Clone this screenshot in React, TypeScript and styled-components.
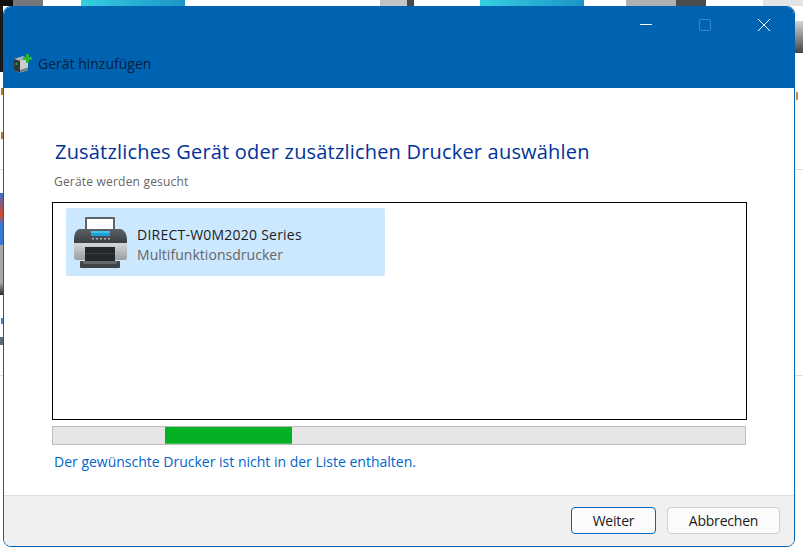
import React from "react";
import styled, { createGlobalStyle } from "styled-components";

const GlobalStyle = createGlobalStyle`
  html, body {
    margin: 0;
    padding: 0;
    background: #ffffff;
  }
  body {
    font-family: "Open Sans", "Noto Sans", "Liberation Sans", sans-serif;
  }
`;

// the page behind the dialog only shows as thin strips round its edge
const solid = (c: string) => `linear-gradient(${c}, ${c})`;
const cyan = "linear-gradient(90deg, #35cfe0, #1c93c8)";

const Desktop = styled.div`
  width: 803px;
  height: 553px;
  overflow: hidden;
  padding: 6px 8px 6px 3px;
  box-sizing: border-box;
  background:
    ${solid("#101010")} 0 0 / 13px 6px no-repeat,
    ${solid("#74777c")} 13px 0 / 30px 6px no-repeat,
    ${cyan} 81px 0 / 104px 6px no-repeat,
    ${solid("#c4c4c4")} 380px 0 / 27px 6px no-repeat,
    ${solid("#4a4a4a")} 407px 0 / 7px 6px no-repeat,
    ${cyan} 480px 0 / 104px 6px no-repeat,
    ${solid("#aeb0b3")} 626px 0 / 50px 6px no-repeat,
    ${solid("#4c4c4c")} 676px 0 / 30px 6px no-repeat,
    ${solid("#e3e4e8")} 763px 0 / 40px 6px no-repeat,
    ${solid("#1a1a1a")} 0 0 / 3px 72px no-repeat,
    ${solid("#b9742a")} 1px 88px / 2px 7px no-repeat,
    ${solid("#b9742a")} 1px 132px / 2px 7px no-repeat,
    ${solid("#dddddd")} 0 169px / 3px 1px no-repeat,
    linear-gradient(180deg, #3a6fd0, #d8482a 42%, #3a78d8 60%) 0 193px / 3px 52px no-repeat,
    linear-gradient(180deg, #a8a8a8 75%, #2a2a2a) 0 245px / 3px 50px no-repeat,
    ${solid("#3a86c8")} 1px 318px / 2px 6px no-repeat,
    ${solid("#5a6a78")} 0 337px / 3px 8px no-repeat,
    ${solid("#dddddd")} 0 375px / 3px 1px no-repeat,
    linear-gradient(180deg, #d5d5d5, #444444) 795px 21px / 8px 32px no-repeat,
    ${solid("#c98a3a")} 796px 92px / 2px 8px no-repeat,
    ${solid("#dddddd")} 795px 169px / 8px 1px no-repeat,
    ${solid("#dddddd")} 795px 375px / 8px 1px no-repeat,
    #ffffff;
`;

const Dialog = styled.div`
  width: 792px;
  height: 541px;
  box-sizing: border-box;
  display: flex;
  flex-direction: column;
  background: #ffffff;
  border: 1px solid #0063b1;
  border-radius: 8px;
  overflow: hidden;
`;

const TitleBar = styled.div`
  height: 82px;
  flex: none;
  margin: -1px -1px 0;
  background: #0063b1;
  display: flex;
  flex-direction: column;
  justify-content: space-between;
`;

const WindowControls = styled.div`
  display: flex;
  justify-content: flex-end;
  align-items: center;
  gap: 47px;
  padding: 13px 25px 0 0;
  height: 12px;
`;

const ControlIcon = styled.svg`
  display: block;
  width: 12px;
  height: 12px;
`;

const TitleRow = styled.div`
  display: flex;
  align-items: center;
  gap: 6px;
  padding: 0 0 15px 11px;
`;

const TitleText = styled.span`
  font-size: 14px;
  line-height: 18px;
  color: #06203f;
`;

const Content = styled.div`
  flex: 1;
  display: flex;
  flex-direction: column;
  padding: 0 48px 0 48px;
`;

const Heading = styled.h1`
  margin: 49px 0 0 3px;
  font-size: 20px;
  font-weight: 400;
  letter-spacing: 0.19px;
  line-height: 30px;
  color: #003399;
`;

const Status = styled.div`
  margin: 7px 0 0 2px;
  font-size: 12px;
  letter-spacing: 0.2px;
  line-height: 16px;
  color: #666666;
`;

const DeviceList = styled.div`
  margin-top: 12px;
  height: 218px;
  width: 695px;
  box-sizing: border-box;
  border: 1.5px solid #000000;
  padding: 5px 13px;
`;

const DeviceItem = styled.div`
  width: 319px;
  height: 68px;
  box-sizing: border-box;
  background: #cce8ff;
  border-radius: 2px;
  display: flex;
  align-items: center;
  gap: 10px;
  padding-left: 6px;
`;

const DeviceText = styled.div`
  display: flex;
  flex-direction: column;
  margin-top: 6px;
`;

const DeviceName = styled.span<{ $muted?: boolean }>`
  font-size: 14px;
  letter-spacing: ${(p) => (p.$muted ? "0.04px" : "0.23px")};
  line-height: 20px;
  color: ${(p) => (p.$muted ? "#666666" : "#1c1c1c")};
`;

const ProgressTrack = styled.div`
  margin-top: 6px;
  width: 694px;
  height: 19px;
  box-sizing: border-box;
  background: #e6e6e6;
  border: 1px solid #bcbcbc;
`;

const ProgressFill = styled.div`
  height: 100%;
  background: #06b025;
  border-bottom: 1px solid #3cc058;
  box-sizing: border-box;
`;

const MissingLink = styled.a`
  margin: 7px 0 0 2px;
  font-size: 14px;
  line-height: 19px;
  color: #0066cc;
  text-decoration: none;
`;

const Footer = styled.div`
  height: 51px;
  flex: none;
  box-sizing: border-box;
  background: #f0f0f0;
  border-top: 1px solid #dfdfdf;
  display: flex;
  justify-content: flex-end;
  align-items: flex-start;
  gap: 11px;
  padding: 11px 14px 0 0;
`;

const Button = styled.button<{ $primary?: boolean; $width: number }>`
  width: ${(p) => p.$width}px;
  height: 27px;
  box-sizing: border-box;
  padding: 0;
  background: #fbfbfb;
  border: 1px solid ${(p) => (p.$primary ? "#0067c0" : "#d0d0d0")};
  border-radius: 4px;
  font-family: inherit;
  font-size: 14px;
  letter-spacing: -0.2px;
  color: #1a1a1a;
`;

const PrinterSvg = styled.svg`
  flex: none;
  margin-top: 2px;
`;

const DeviceAddIcon = () => (
  <svg width="18" height="19" viewBox="0 0 18 19">
    <path d="M0 5 L9 2 L14 4 L14 16 L6 18.5 L0 16.5 Z" fill="#aab0b3" />
    <path d="M0 5 L6 7 L6 18.5 L0 16.5 Z" fill="#2e3639" />
    <path d="M6 7 L14 4.5 L14 16 L6 18.5 Z" fill="#c9cdcf" />
    <path d="M6 16 L14 13.5 L14 16 L6 18.5 Z" fill="#777c7f" />
    <rect x="1.6" y="8.5" width="1.6" height="2.5" fill="#3ba648" />
    <path d="M12 0 h3 v3 h3 v3 h-3 v3 h-3 v-3 h-3 v-3 h3 Z" fill="#22b83a" />
  </svg>
);

const PrinterIcon = () => (
  <PrinterSvg width="55" height="52" viewBox="0 0 55 52">
    <defs>
      <linearGradient id="printerTop" x1="0" y1="0" x2="0" y2="1">
        <stop offset="0" stopColor="#5c6168" />
        <stop offset="1" stopColor="#383c40" />
      </linearGradient>
      <linearGradient id="printerBody" x1="0" y1="0" x2="0" y2="1">
        <stop offset="0" stopColor="#d3d7da" />
        <stop offset="1" stopColor="#9a9ea1" />
      </linearGradient>
    </defs>
    <rect x="13" y="0" width="30" height="14" fill="#5f6468" rx="1" />
    <rect x="15" y="2" width="26" height="12" fill="#ffffff" />
    <path d="M8 12 H48 C52 12 55 17 55 23 V27 H2 V23 C2 17 4 12 8 12 Z" fill="url(#printerTop)" />
    <path d="M2 26 H55 V40 Q55 43 52 43 H5 Q2 43 2 40 Z" fill="url(#printerBody)" />
    <rect x="19" y="14" width="19" height="5" fill="#1aa0dc" rx="0.5" />
    <rect x="19" y="14" width="19" height="2" fill="#46c0ea" />
    <g fill="#a9b0b5">
      <rect x="20" y="21" width="2" height="1.5" />
      <rect x="24" y="21" width="2" height="1.5" />
      <rect x="28" y="21" width="2" height="1.5" />
      <rect x="32" y="21" width="2" height="1.5" />
      <rect x="36" y="21" width="2" height="1.5" />
    </g>
    <rect x="13" y="30" width="30" height="15" fill="#24272a" />
    <rect x="13" y="36" width="30" height="1" fill="#3c4044" />
    <rect x="8" y="44" width="40" height="7" fill="#3f4347" rx="1" />
    <rect x="11" y="44" width="34" height="3" fill="#63686c" />
  </PrinterSvg>
);

const progress = { start: 112, length: 127 };

export default function App() {
  return (
    <>
      <GlobalStyle />
      <Desktop>
        <Dialog>
          <TitleBar>
            <WindowControls>
              <ControlIcon viewBox="0 0 12 12">
                <path d="M0 5.5 H12" stroke="#ffffff" strokeWidth="1" />
              </ControlIcon>
              <ControlIcon viewBox="0 0 12 12">
                <rect x="0.5" y="0.5" width="11" height="11" rx="1.5" fill="none" stroke="#3a85c6" strokeWidth="1" />
              </ControlIcon>
              <ControlIcon viewBox="0 0 12 12">
                <path d="M0 0 L12 12 M12 0 L0 12" stroke="#ffffff" strokeWidth="1" />
              </ControlIcon>
            </WindowControls>
            <TitleRow>
              <DeviceAddIcon />
              <TitleText>Gerät hinzufügen</TitleText>
            </TitleRow>
          </TitleBar>
          <Content>
            <Heading>Zusätzliches Gerät oder zusätzlichen Drucker auswählen</Heading>
            <Status>Geräte werden gesucht</Status>
            <DeviceList>
              <DeviceItem>
                <PrinterIcon />
                <DeviceText>
                  <DeviceName>DIRECT-W0M2020 Series</DeviceName>
                  <DeviceName $muted>Multifunktionsdrucker</DeviceName>
                </DeviceText>
              </DeviceItem>
            </DeviceList>
            <ProgressTrack>
              <ProgressFill style={{ width: progress.length, marginLeft: progress.start }} />
            </ProgressTrack>
            <MissingLink>Der gewünschte Drucker ist nicht in der Liste enthalten.</MissingLink>
          </Content>
          <Footer>
            <Button $primary $width={85}>Weiter</Button>
            <Button $width={113}>Abbrechen</Button>
          </Footer>
        </Dialog>
      </Desktop>
    </>
  );
}
